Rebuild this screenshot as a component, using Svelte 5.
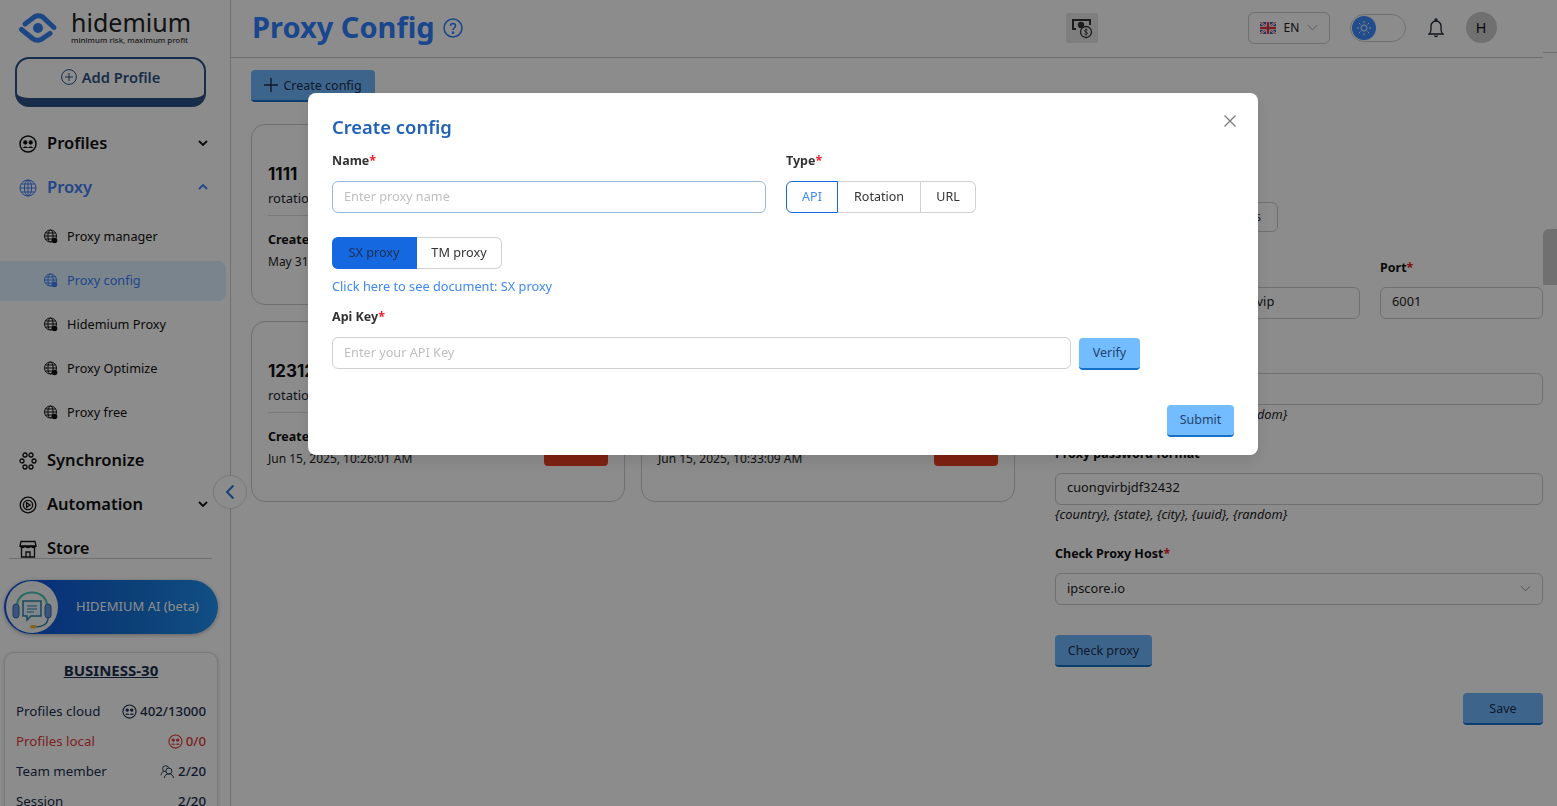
<script>
  const subItems = [
    { label: 'Proxy manager' },
    { label: 'Proxy config', active: true },
    { label: 'Hidemium Proxy' },
    { label: 'Proxy Optimize' },
    { label: 'Proxy free' }
  ];

  const cards = [
    { name: '1111', created: 'May 31, 2025, 09:12:44 AM' },
    { name: '1111', created: 'May 31, 2025, 09:40:18 AM' },
    { name: '12312', created: 'Jun 15, 2025, 10:26:01 AM' },
    { name: '12312', created: 'Jun 15, 2025, 10:33:09 AM' }
  ];

  let type = $state('API');
  let vendor = $state('SX proxy');
</script>

<div class="app">
  <aside class="sidebar">
    <div class="brand">
      <svg class="logo" viewBox="0 0 40 32" width="40" height="32">
        <path d="M7 12 L16.500 4.800 Q20.500 2.800 24.500 4.800 L36 15.500" fill="none" stroke="#3580f0" stroke-width="5" stroke-linecap="round" />
        <path d="M3.500 17.500 L14.500 26.500 Q18.500 29.500 23 27.500 L32 21.500" fill="none" stroke="#3580f0" stroke-width="5" stroke-linecap="round" />
        <circle cx="20" cy="16" r="5" fill="#3580f0" />
      </svg>
      <div class="brand-text">
        <div class="brand-name">hidemium</div>
        <div class="brand-tag">minimum risk, maximum profit</div>
      </div>
    </div>

    <button class="add-profile">
      <svg viewBox="0 0 16 16" width="16" height="16" fill="none" stroke="#2d5286" stroke-width="1">
        <circle cx="8" cy="8" r="7.400" /><path d="M8 4v8M4 8h8" />
      </svg>
      Add Profile
    </button>

    <nav class="nav">
      <div class="nav-item">
        <svg class="nav-icon" viewBox="0 0 18 18" fill="none" stroke="#111" stroke-width="1.500">
          <circle cx="9" cy="9" r="8" /><circle cx="6.300" cy="7.500" r="1.400" fill="#111" /><circle cx="11.700" cy="7.500" r="1.400" fill="#111" /><path d="M4 13c.3-2 4-2 5 0 1-2 4.700-2 5 0z" fill="#111" stroke="none" />
        </svg>
        <span>Profiles</span>
        <svg class="chev" viewBox="0 0 10 6" fill="none" stroke="#111" stroke-width="1.800"><path d="M1 1l4 4 4-4" /></svg>
      </div>
      <div class="nav-item blue">
        <svg class="nav-icon" viewBox="0 0 18 18" fill="none" stroke="#3f80fa" stroke-width="1">
          <circle cx="9" cy="9" r="8" /><ellipse cx="9" cy="9" rx="3.600" ry="8" /><path d="M1 9h16M2.200 5h13.600M2.200 13h13.600M9 1v16" />
        </svg>
        <span>Proxy</span>
        <svg class="chev" viewBox="0 0 10 6" fill="none" stroke="#3f80fa" stroke-width="1.800"><path d="M1 5l4-4 4 4" /></svg>
      </div>

      <div class="sub-list">
        {#each subItems as item}
          <div class="sub-item" class:active={item.active}>
            <svg viewBox="0 0 15 15" width="15" height="15" fill="none" stroke={item.active ? '#3f80fa' : '#111'} stroke-width="1">
              <circle cx="7.500" cy="7" r="6" /><ellipse cx="7.500" cy="7" rx="2.600" ry="6" /><path d="M1.500 7h12M2.400 4h10.200M2.400 10h10.200" />
              <circle cx="11.500" cy="11.500" r="2.800" fill={item.active ? '#3f80fa' : '#111'} stroke="none" />
            </svg>
            <span>{item.label}</span>
          </div>
        {/each}
      </div>

      <div class="nav-item">
        <svg class="nav-icon" viewBox="0 0 18 18" fill="none" stroke="#111" stroke-width="1.300">
          <circle cx="6" cy="3" r="2" /><circle cx="12" cy="3" r="2" /><circle cx="3" cy="9" r="2" /><circle cx="15" cy="9" r="2" /><circle cx="6" cy="15" r="2" /><circle cx="12" cy="15" r="2" />
        </svg>
        <span>Synchronize</span>
      </div>
      <div class="nav-item">
        <svg class="nav-icon" viewBox="0 0 18 18" fill="none" stroke="#111" stroke-width="1.300">
          <circle cx="9" cy="9" r="7.800" /><circle cx="9" cy="9" r="4.600" /><path d="M7.600 6.800v4.400l3.400-2.200z" />
        </svg>
        <span>Automation</span>
        <svg class="chev" viewBox="0 0 10 6" fill="none" stroke="#111" stroke-width="1.800"><path d="M1 1l4 4 4-4" /></svg>
      </div>
      <div class="nav-item">
        <svg class="nav-icon" viewBox="0 0 18 18" fill="none" stroke="#111" stroke-width="1.300">
          <path d="M2 1.500h14l1 4.500H1zM2.500 6v11h13V6M1 6c1 2 4 2 5 0 1 2 5 2 6 0 1 2 4 2 5 0M7 17v-5h4v5" />
        </svg>
        <span>Store</span>
      </div>
    </nav>
    <div class="nav-rule"></div>

    <div class="ai-button">
      <div class="ai-avatar">
        <svg viewBox="0 0 46 46" width="46" height="46" fill="none">
          <path d="M8 22C8 4 38 4 38 22" stroke="#4fc0b4" stroke-width="2" />
          <rect x="4" y="20" width="6" height="14" rx="3" fill="#6d9ae0" stroke="#2c6bb0" />
          <rect x="36" y="20" width="6" height="14" rx="3" fill="#6d9ae0" stroke="#2c6bb0" />
          <path d="M14 17h18v15H22l-4 4v-4h-4z" fill="#e8f4fa" stroke="#2c80a8" stroke-width="1.500" />
          <path d="M18 22h10M18 25h10M18 28h7" stroke="#2c80a8" />
          <path d="M39 34c0 6-6 9-12 9" stroke="#2c80a8" stroke-width="1.500" />
          <rect x="21" y="41" width="7" height="3.500" rx="1.700" fill="#e5b64a" />
        </svg>
      </div>
      <span>HIDEMIUM AI (beta)</span>
    </div>

    <section class="plan">
      <div class="plan-title">BUSINESS-30</div>
      <div class="plan-row">
        <span>Profiles cloud</span>
        <span class="plan-value">
          <svg viewBox="0 0 16 16" width="15" height="15" fill="none" stroke="#1b2f4f" stroke-width="1.200"><circle cx="8" cy="8" r="7" /><circle cx="5.600" cy="6.500" r="1.200" fill="#1b2f4f" /><circle cx="10.400" cy="6.500" r="1.200" fill="#1b2f4f" /><path d="M3.500 11.500c.3-2 3.500-2 4.500 0 1-2 4.200-2 4.500 0z" fill="#1b2f4f" stroke="none" /></svg>
          402/13000
        </span>
      </div>
      <div class="plan-row danger">
        <span>Profiles local</span>
        <span class="plan-value">
          <svg viewBox="0 0 16 16" width="15" height="15" fill="none" stroke="#e53b3b" stroke-width="1.200"><circle cx="8" cy="8" r="7" /><circle cx="5.600" cy="6.500" r="1.200" fill="#e53b3b" /><circle cx="10.400" cy="6.500" r="1.200" fill="#e53b3b" /><path d="M3.500 11.500c.3-2 3.500-2 4.500 0 1-2 4.200-2 4.500 0z" fill="#e53b3b" stroke="none" /></svg>
          0/0
        </span>
      </div>
      <div class="plan-row">
        <span>Team member</span>
        <span class="plan-value">
          <svg viewBox="0 0 16 16" width="15" height="15" fill="none" stroke="#1b2f4f" stroke-width="1"><circle cx="6" cy="5" r="3.200" /><circle cx="9.500" cy="7.500" r="3.200" fill="#fff" /><path d="M1 12c.5-3 2-4 3-4M4.500 15c.5-3 2.500-4.500 5-4.500s4.500 1.500 5 4.500" /></svg>
          2/20
        </span>
      </div>
      <div class="plan-row">
        <span>Session</span>
        <span class="plan-value">2/20</span>
      </div>
    </section>
  </aside>

  <button class="collapse" aria-label="Collapse">
    <svg viewBox="0 0 10 16" width="10" height="16" fill="none" stroke="#2f74dc" stroke-width="2"><path d="M8.500 1.500L2 8l6.500 6.500" /></svg>
  </button>

  <div class="main">
    <header class="topbar">
      <h1>Proxy Config</h1>
      <svg class="help" viewBox="0 0 20 20" width="20" height="20" fill="none" stroke="#2e80ff" stroke-width="1.500">
        <circle cx="10" cy="10" r="9" /><path d="M7.500 8c0-3.200 5-3.200 5 0 0 2-2.500 1.800-2.500 4" /><circle cx="10" cy="14.700" r=".6" fill="#2e80ff" />
      </svg>
      <div class="money">
        <svg viewBox="0 0 22 22" width="22" height="22" fill="none" stroke="#333" stroke-width="1.300">
          <path d="M5 12H2V3h17v5" stroke-width="2" /><circle cx="10" cy="8" r="2.500" fill="#333" /><circle cx="15" cy="15" r="5.500" /><path d="M16.500 13c-1-1-3-.5-3 .8 0 1.700 3 .8 3 2.400 0 1.300-2 1.600-3 .8M15 11.500v7" stroke-width=".9" />
        </svg>
      </div>
      <div class="lang">
        <svg viewBox="0 0 16 12" width="16" height="12">
          <rect width="16" height="12" rx="1" fill="#3b5bb0" />
          <path d="M0 0l16 12M16 0L0 12" stroke="#fff" stroke-width="2.400" />
          <path d="M0 0l16 12M16 0L0 12" stroke="#d8324a" stroke-width=".8" />
          <path d="M8 0v12M0 6h16" stroke="#fff" stroke-width="4" />
          <path d="M8 0v12M0 6h16" stroke="#d8324a" stroke-width="2.400" />
        </svg>
        <span>EN</span>
        <svg viewBox="0 0 12 7" width="11" height="7" fill="none" stroke="#999" stroke-width="1"><path d="M1 1l5 5 5-5" /></svg>
      </div>
      <div class="theme-toggle">
        <div class="knob">
          <svg viewBox="0 0 14 14" width="14" height="14" fill="none" stroke="#fff" stroke-width=".9">
            <circle cx="7" cy="7" r="3" /><path d="M7 0v2M7 12v2M0 7h2M12 7h2M2 2l1.500 1.500M10.500 10.500L12 12M12 2l-1.500 1.500M3.500 10.500L2 12" />
          </svg>
        </div>
      </div>
      <svg class="bell" viewBox="0 0 16 20" width="16" height="20" fill="none" stroke="#1c2530" stroke-width="1.300">
        <path d="M1 16h14c-1.500-1-2-2.500-2-5V8a5 5 0 0 0-10 0v3c0 2.500-.5 4-2 5z" /><circle cx="8" cy="1.800" r="1" /><path d="M6.500 17.500c.4 1.300 2.600 1.300 3 0" />
      </svg>
      <div class="avatar">H</div>
    </header>

    <div class="content">
      <div class="configs">
        <button class="create-btn">
          <svg viewBox="0 0 14 14" width="14" height="14" fill="none" stroke="#1b2f4f" stroke-width="1.400"><path d="M7 0v14M0 7h14" /></svg>
          Create config
        </button>
        <div class="cards">
          {#each cards as card}
            <article class="card">
              <div class="card-name">{card.name}</div>
              <div class="card-type">rotation</div>
              <div class="card-foot">
                <div>
                  <div class="card-label">Created at</div>
                  <div class="card-date">{card.created}</div>
                </div>
                <div class="card-delete"></div>
              </div>
            </article>
          {/each}
        </div>
      </div>

      <div class="panel">
        <div class="vendor-chip">s</div>
        <div class="host-row">
          <div class="field grow">
            <label>Host<em>*</em></label>
            <div class="input">rotating-residential.proxy-sxtm.vip</div>
          </div>
          <div class="field port">
            <label>Port<em>*</em></label>
            <div class="input">6001</div>
          </div>
        </div>
        <div class="field user">
          <label>Proxy username format<em>*</em></label>
          <div class="input"></div>
          <div class="hint">{'{country}, {state}, {city}, {uuid}, {random}'}</div>
        </div>
        <div class="field pass">
          <label>Proxy password format<em>*</em></label>
          <div class="input">cuongvirbjdf32432</div>
          <div class="hint">{'{country}, {state}, {city}, {uuid}, {random}'}</div>
        </div>
        <div class="field check">
          <label>Check Proxy Host<em>*</em></label>
          <div class="input select">
            ipscore.io
            <svg viewBox="0 0 12 7" width="11" height="7" fill="none" stroke="#888" stroke-width="1"><path d="M1 1l5 5 5-5" /></svg>
          </div>
        </div>
        <button class="solid-btn check-btn">Check proxy</button>
        <div class="save-row">
          <button class="solid-btn save-btn">Save</button>
        </div>
      </div>
      <div class="scrollbar"><div class="thumb"></div></div>
    </div>
  </div>

  <div class="overlay">
    <div class="modal">
      <button class="close" aria-label="Close">
        <svg viewBox="0 0 12 12" width="12" height="12" fill="none" stroke="#777" stroke-width="1.200"><path d="M.5.5l11 11M11.500.5l-11 11" /></svg>
      </button>
      <h2>Create config</h2>

      <div class="modal-top">
        <div class="m-field name">
          <div class="m-label">Name<em>*</em></div>
          <input class="m-input focus" placeholder="Enter proxy name" />
        </div>
        <div class="m-field">
          <div class="m-label">Type<em>*</em></div>
          <div class="segments">
            {#each ['API', 'Rotation', 'URL'] as t}
              <button class:on={type === t} onclick={() => (type = t)}>{t}</button>
            {/each}
          </div>
        </div>
      </div>

      <div class="vendors">
        {#each ['SX proxy', 'TM proxy'] as v}
          <button class:on={vendor === v} onclick={() => (vendor = v)}>{v}</button>
        {/each}
      </div>
      <div class="doc-link">Click here to see document: SX proxy</div>

      <div class="m-label api">Api Key<em>*</em></div>
      <div class="api-row">
        <input class="m-input" placeholder="Enter your API Key" />
        <button class="light-btn verify">Verify</button>
      </div>

      <div class="modal-foot">
        <button class="light-btn submit">Submit</button>
      </div>
    </div>
  </div>
</div>

<style>
  :global(body) {
    margin: 0;
    background: #fff;
    font-family: "Noto Sans", sans-serif;
    color: #1c2530;
  }

  button {
    font-family: inherit;
    cursor: pointer;
  }

  .app {
    display: flex;
    height: 806px;
    overflow: hidden;
  }

  .sidebar {
    width: 231px;
    box-sizing: border-box;
    flex-shrink: 0;
    border-right: 1px solid #ccc;
    display: flex;
    flex-direction: column;
    overflow: hidden;
  }

  .sidebar > * {
    flex-shrink: 0;
  }

  .brand {
    display: flex;
    gap: 13px;
    padding: 12px 0 0 18px;
    height: 45px;
  }

  .brand-name {
    font-size: 25px;
    line-height: 25px;
    color: #222;
  }

  .brand-tag {
    font-size: 7.850px;
    font-weight: 500;
    line-height: 9px;
    margin-top: 1px;
    color: #333;
    white-space: nowrap;
  }

  .brand-text {
    margin-top: -2px;
  }

  .add-profile {
    margin: 0 0 0 15px;
    width: 191px;
    height: 50px;
    box-sizing: border-box;
    background: #fff;
    border: 2px solid #2d5286;
    border-bottom-width: 9px;
    border-radius: 14px;
    color: #2d5286;
    font-size: 14.700px;
    font-weight: 600;
    display: flex;
    justify-content: center;
    align-items: center;
    gap: 5px;
    padding: 0 0 3px;
  }

  .nav {
    height: 451px;
    padding-top: 14px;
    box-sizing: border-box;
    overflow: hidden;
  }

  .nav-item {
    display: flex;
    align-items: center;
    height: 44px;
    padding-left: 19px;
    font-size: 16.500px;
    font-weight: 600;
    color: #111;
    width: 208px;
    box-sizing: border-box;
  }

  .nav-item span {
    margin-bottom: 2px;
  }

  .nav-item.blue {
    color: #3f80fa;
  }

  .nav-icon {
    width: 18px;
    height: 18px;
    margin: 2px 10px 0 0;
    flex-shrink: 0;
  }

  .chev {
    width: 10px;
    height: 6px;
    margin-left: auto;
  }

  .nav-rule {
    height: 1px;
    margin: 0 18px 0 9px;
    background: #ccc;
  }

  .sub-list {
    display: flex;
    flex-direction: column;
    gap: 4px;
    padding: 8px 0 5px;
  }

  .sub-item {
    display: flex;
    align-items: center;
    gap: 9px;
    height: 40px;
    padding: 0 0 2px 43px;
    font-size: 12.700px;
    color: #111;
    width: 226px;
    box-sizing: border-box;
    border-radius: 0 8px 8px 0;
  }

  .sub-item.active {
    background: #dcf0ff;
    color: #3f80fa;
  }

  .ai-button {
    display: flex;
    align-items: center;
    margin: 21px 0 0 4px;
    width: 214px;
    height: 54px;
    box-sizing: border-box;
    border-radius: 27px;
    background: linear-gradient(90deg, #0f50dc, #1674d8 60%, #2090f0);
    color: #fff;
    font-size: 13px;
    box-shadow: 0 1px 4px rgba(0, 0, 0, 0.3);
  }

  .ai-button span {
    margin-bottom: 2px;
  }

  .ai-avatar {
    width: 52px;
    height: 52px;
    margin-left: 2px;
    border-radius: 50%;
    background: #f6fafa;
    display: flex;
    align-items: center;
    justify-content: center;
    margin-right: 18px;
  }

  .plan {
    margin: 18px 0 0 4px;
    width: 214px;
    box-sizing: border-box;
    border: 1px solid #ddd;
    border-radius: 10px;
    padding: 8px 11px 0 11px;
    box-shadow: 0 1px 4px rgba(0, 0, 0, 0.15);
  }

  .plan-title {
    text-align: center;
    text-decoration: underline;
    font-size: 15px;
    font-weight: 700;
    color: #1b2f4f;
    line-height: 18px;
    margin-bottom: 17px;
  }

  .plan-row {
    display: flex;
    justify-content: space-between;
    align-items: center;
    height: 30px;
    font-size: 13.300px;
    color: #1b2f4f;
  }

  .plan-row.danger {
    color: #e53b3b;
  }

  .plan-value {
    display: flex;
    align-items: center;
    gap: 3px;
    font-weight: 500;
  }

  .collapse {
    position: absolute;
    left: 213px;
    top: 475px;
    width: 34px;
    height: 34px;
    border-radius: 50%;
    border: 1px solid #ddd;
    background: #fff;
    display: flex;
    align-items: center;
    justify-content: center;
    padding: 0;
    z-index: 2;
  }

  .main {
    flex: 1;
    min-width: 0;
    display: flex;
    flex-direction: column;
  }

  .topbar {
    height: 58px;
    box-sizing: border-box;
    margin-right: 14px;
    border-bottom: 1px solid #ccc;
    padding: 0 0 2px 21px;
    display: flex;
    align-items: center;
    position: relative;
  }

  .topbar::after {
    content: "";
    position: absolute;
    left: 100%;
    bottom: 4px;
    width: 14px;
    height: 1px;
    background: #ccc;
  }

  h1 {
    margin: 0 8px 2px 0;
    font-size: 29px;
    font-weight: 700;
    color: #2e80ff;
    white-space: nowrap;
  }

  .help {
    flex-shrink: 0;
  }

  .money {
    width: 32px;
    height: 30px;
    background: #e6e6e6;
    margin-left: 603px;
    display: flex;
    align-items: center;
    justify-content: center;
    border-radius: 2px;
  }

  .lang {
    width: 82px;
    height: 32px;
    box-sizing: border-box;
    margin-left: 150px;
    border: 1px solid #ccc;
    border-radius: 6px;
    display: flex;
    align-items: center;
    padding-left: 11px;
    gap: 8px;
    font-size: 12px;
    color: #222;
  }

  .theme-toggle {
    width: 56px;
    height: 28px;
    box-sizing: border-box;
    margin-left: 20px;
    border: 1px solid #ccc;
    border-radius: 14px;
    padding: 1px;
  }

  .knob {
    width: 24px;
    height: 24px;
    border-radius: 50%;
    background: #3f8cff;
    display: flex;
    align-items: center;
    justify-content: center;
  }

  .bell {
    margin-left: 22px;
  }

  .avatar {
    width: 31px;
    height: 31px;
    border-radius: 50%;
    background: #ccc;
    margin-left: 22px;
    display: flex;
    align-items: center;
    justify-content: center;
    font-size: 14px;
    color: #111;
    font-family: "Liberation Sans", sans-serif;
  }

  .content {
    flex: 1;
    display: flex;
    min-height: 0;
    position: relative;
  }

  .configs {
    width: 824px;
    padding: 12px 0 0 20px;
    box-sizing: border-box;
  }

  .create-btn {
    width: 124px;
    height: 32px;
    background: #6fb8ff;
    border: none;
    border-bottom: 2px solid #1570c8;
    border-radius: 4px;
    font-size: 12.500px;
    color: #1b2f4f;
    display: flex;
    align-items: center;
    justify-content: center;
    gap: 5px;
    padding: 0;
  }

  .cards {
    display: grid;
    grid-template-columns: 374px 374px;
    gap: 16px;
    margin-top: 22px;
  }

  .card {
    height: 181px;
    box-sizing: border-box;
    border: 1px solid #ccc;
    border-radius: 14px;
    padding: 38px 16px 0;
  }

  .card-name {
    font-family: Inter, sans-serif;
    font-size: 17px;
    font-weight: 700;
    color: #111;
    line-height: 22px;
  }

  .card-type {
    font-size: 13px;
    line-height: 18px;
    margin-top: 4px;
    padding-bottom: 8px;
    border-bottom: 1px solid #ddd;
  }

  .card-foot {
    display: flex;
    justify-content: space-between;
    align-items: flex-end;
    margin-top: 15px;
  }

  .card-label {
    font-size: 12.500px;
    font-weight: 700;
    line-height: 18px;
    color: #111;
  }

  .card-date {
    font-size: 12px;
    line-height: 18px;
    margin-top: 4px;
    color: #222;
  }

  .card-delete {
    width: 64px;
    height: 32px;
    margin-bottom: 2px;
    background: #e63e22;
    border-radius: 4px;
  }

  .panel {
    width: 488px;
    margin-left: 0;
    padding-top: 144px;
    box-sizing: border-box;
    position: relative;
  }

  .vendor-chip {
    position: absolute;
    right: 265px;
    top: 144px;
    width: 60px;
    height: 30px;
    box-sizing: border-box;
    border: 1px solid #ccc;
    border-radius: 0 6px 6px 0;
    font-size: 12px;
    line-height: 28px;
    text-align: right;
    padding-right: 16px;
    color: #333;
  }

  .host-row {
    display: flex;
    gap: 20px;
    margin-top: 57px;
  }

  .grow {
    flex: 1;
    min-width: 0;
  }

  .port {
    width: 163px;
  }

  .field label {
    display: block;
    font-size: 12.500px;
    font-weight: 700;
    color: #111;
    line-height: 18px;
    margin-bottom: 10px;
    white-space: nowrap;
  }

  em {
    font-style: normal;
    color: #f0202c;
  }

  .input {
    height: 32px;
    box-sizing: border-box;
    border: 1px solid #ccc;
    border-radius: 6px;
    padding: 0 11px;
    font-size: 12.800px;
    line-height: 27px;
    color: #222;
    white-space: nowrap;
    overflow: hidden;
  }

  .hint {
    font-size: 12.800px;
    font-style: italic;
    line-height: 18px;
    color: #222;
  }

  .user {
    margin-top: 26px;
  }

  .pass {
    margin-top: 22px;
  }

  .check {
    margin-top: 22px;
  }

  .select {
    display: flex;
    align-items: center;
    justify-content: space-between;
    padding-bottom: 2px;
  }

  .solid-btn {
    background: #6fb8ff;
    border: none;
    border-bottom: 2px solid #1570c8;
    border-radius: 4px;
    font-size: 12.500px;
    color: #1b2f4f;
    height: 32px;
    padding: 0;
  }

  .check-btn {
    width: 97px;
    margin-top: 30px;
    display: block;
  }

  .save-row {
    display: flex;
    justify-content: flex-end;
    margin-top: 26px;
  }

  .save-btn {
    width: 80px;
  }

  .scrollbar {
    width: 14px;
    position: absolute;
    right: 0;
    top: 171px;
  }

  .thumb {
    height: 56px;
    background: #ccc;
    border-radius: 6px 0 0 0;
  }

  .overlay {
    position: fixed;
    inset: 0;
    background: rgba(0, 0, 0, 0.45);
    z-index: 10;
  }

  .modal {
    position: absolute;
    left: 308px;
    top: 93px;
    width: 950px;
    height: 362px;
    box-sizing: border-box;
    padding: 22px 24px 0;
    background: #fff;
    border-radius: 8px;
    box-shadow: 0 6px 16px rgba(0, 0, 0, 0.1);
    display: flex;
    flex-direction: column;
  }

  .close {
    position: absolute;
    top: 22px;
    right: 22px;
    width: 12px;
    height: 12px;
    padding: 0;
    border: none;
    background: none;
    display: flex;
  }

  h2 {
    margin: 0;
    font-size: 18.400px;
    font-weight: 600;
    line-height: 24px;
    color: #2062b8;
  }

  .modal-top {
    display: flex;
    gap: 20px;
    margin-top: 13px;
  }

  .m-field.name {
    width: 434px;
  }

  .m-label {
    font-size: 12.500px;
    font-weight: 700;
    line-height: 18px;
    color: #333;
  }

  .m-field .m-label {
    margin-bottom: 11px;
  }

  .m-input {
    width: 100%;
    height: 32px;
    box-sizing: border-box;
    border: 1px solid #d0d0d0;
    border-radius: 6px;
    padding: 0 11px 2px;
    font-family: inherit;
    font-size: 12.700px;
    color: #222;
    outline: none;
    display: block;
  }

  .m-input::placeholder {
    color: #bfbfbf;
    opacity: 1;
  }

  .m-input.focus {
    border-color: #9ab8de;
  }

  .segments {
    display: flex;
  }

  .segments button {
    height: 32px;
    box-sizing: border-box;
    padding: 0 0 2px;
    background: #fff;
    border: 1px solid #d0d0d0;
    border-left: none;
    font-size: 12.500px;
    color: #333;
    width: 83px;
  }

  .segments button:first-child {
    width: 52px;
    border-left: 1px solid #d0d0d0;
    border-radius: 6px 0 0 6px;
  }

  .segments button:last-child {
    width: 55px;
    border-radius: 0 6px 6px 0;
  }

  .segments button.on {
    color: #3f88f5;
    border: 1px solid #1668e0;
  }

  .vendors {
    display: flex;
    margin-top: 24px;
  }

  .vendors button {
    height: 32px;
    width: 85px;
    box-sizing: border-box;
    padding: 0 0 2px;
    background: #fff;
    border: 1px solid #d0d0d0;
    border-left: none;
    border-radius: 0 6px 6px 0;
    font-size: 12.700px;
    color: #333;
  }

  .vendors button.on {
    background: #1668e0;
    border-color: #1668e0;
    border-radius: 6px 0 0 6px;
    color: #1b2f4f;
  }

  .doc-link {
    font-size: 12.750px;
    line-height: 18px;
    color: #3f88f5;
    margin-top: 8px;
  }

  .m-label.api {
    margin-top: 13px;
  }

  .api-row {
    display: flex;
    gap: 8px;
    margin-top: 11px;
    align-items: flex-start;
  }

  .api-row .m-input {
    width: 739px;
  }

  .light-btn {
    height: 32px;
    background: #72bcff;
    border: none;
    border-bottom: 2px solid #1570c8;
    border-radius: 4px;
    font-size: 12.500px;
    color: #24446e;
    padding: 0 0 2px;
  }

  .verify {
    width: 61px;
    margin-top: 1px;
  }

  .modal-foot {
    display: flex;
    justify-content: flex-end;
    margin-top: 35px;
  }

  .submit {
    width: 67px;
  }
</style>
